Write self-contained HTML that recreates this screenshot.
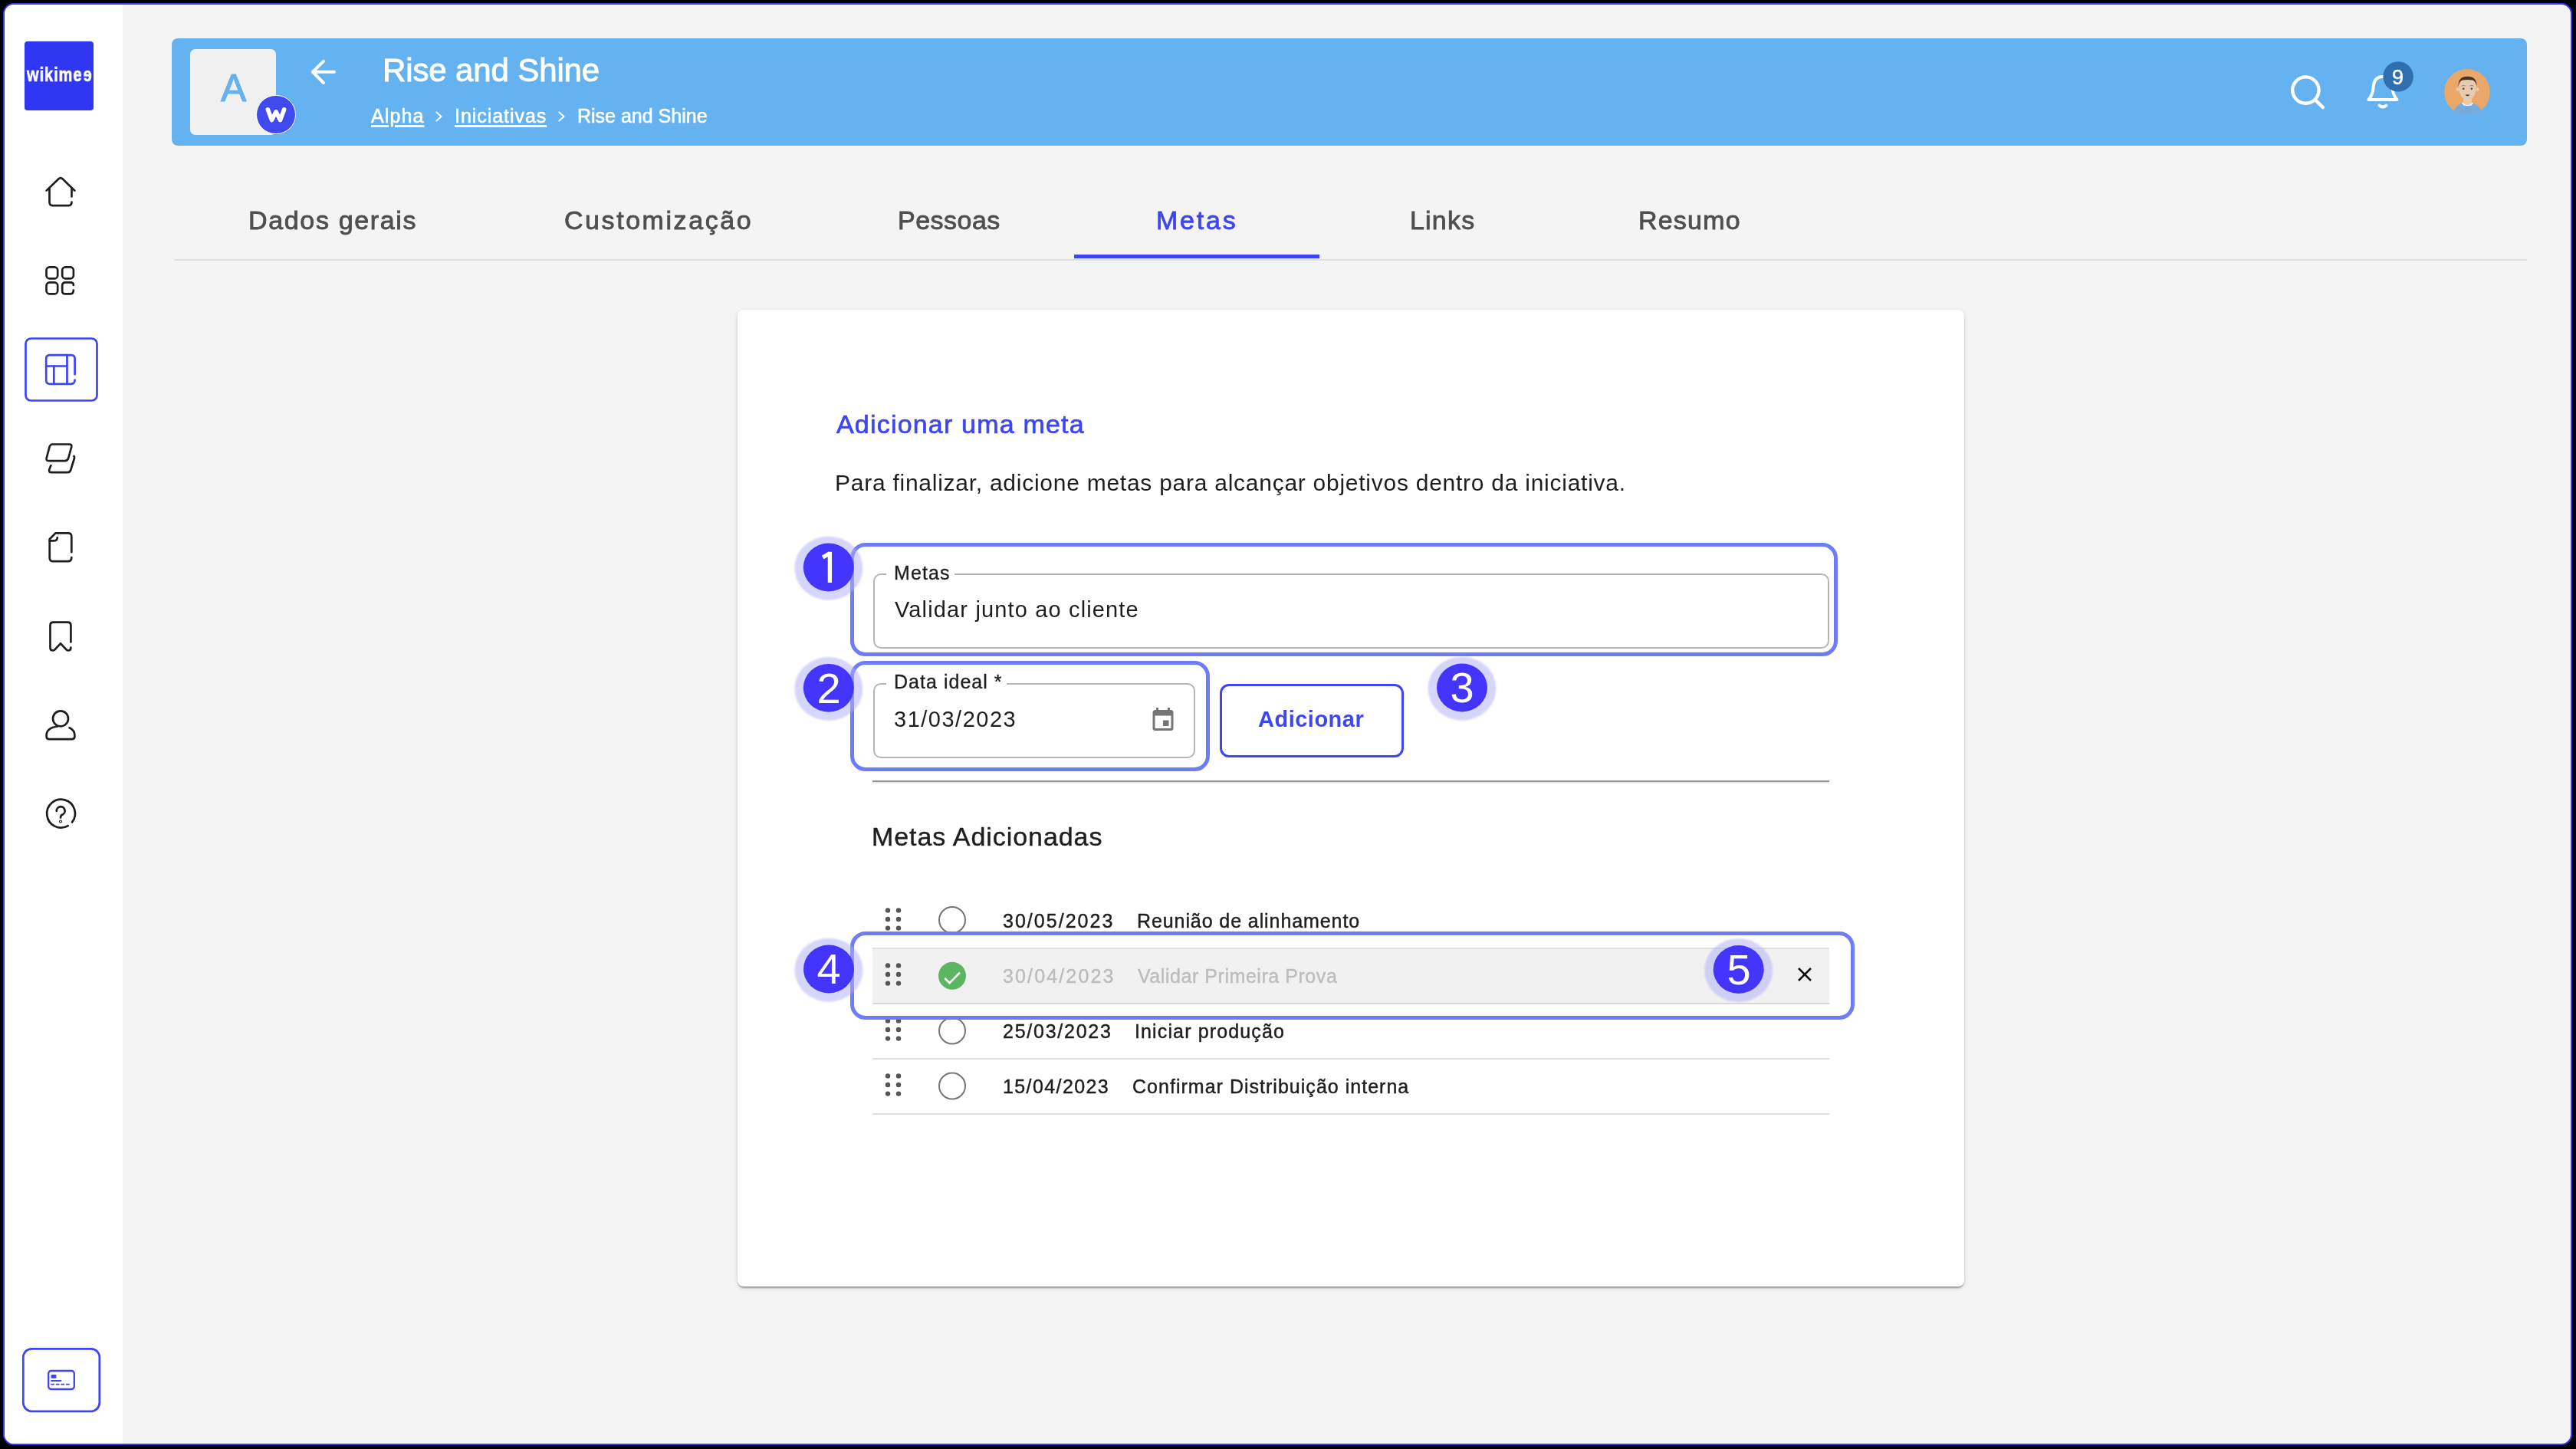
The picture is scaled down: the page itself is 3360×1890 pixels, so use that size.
<!DOCTYPE html>
<html><head><meta charset="utf-8"><title>Metas</title><style>
*{margin:0;padding:0;box-sizing:border-box}
html,body{width:3360px;height:1890px;overflow:hidden;background:#000;font-family:"Liberation Sans",sans-serif}
.t{position:absolute;white-space:pre;line-height:1;will-change:transform}
.ib{display:inline-block}
u{text-decoration-thickness:3px;text-underline-offset:2.5px}
#frame{position:absolute;left:4px;top:4px;width:3351px;height:1881px;border:2px solid #3d35f5;border-radius:14px;background:#f4f4f4}
#sidebar{position:absolute;left:6px;top:6px;width:154px;height:1877px;background:#fff;border-radius:12px 0 0 12px}
#logo{position:absolute;left:32px;top:54px;width:90px;height:90px;background:#2f37f2;border-radius:4px}
#header{position:absolute;left:224px;top:50px;width:3072px;height:140px;background:#64b2f0;border-radius:8px}
#avsq{position:absolute;left:248px;top:64px;width:112px;height:112px;background:#f1f1f1;border-radius:7px}
#wcirc{position:absolute;left:334.4px;top:123.9px;width:51.2px;height:51.2px;border-radius:50%;background:#4048f0;border:1.8px solid #fff}
#tabline{position:absolute;left:227px;top:338px;width:3069px;height:2px;background:#e0e0e0}
#tabind{position:absolute;left:1401px;top:332px;width:320px;height:5px;background:#3d46f0}
#card{position:absolute;left:962px;top:404px;width:1600px;height:1274px;background:#fff;border-radius:8px;box-shadow:0 4px 2px -2px rgba(0,0,0,.2),0 2px 2px 0 rgba(0,0,0,.14),0 2px 6px 0 rgba(0,0,0,.12)}
.hl{position:absolute;border:5px solid #6f7cf8;border-radius:20px}
.fld{position:absolute;border:2px solid #b5b5b5;border-radius:10px}
.notch{position:absolute;height:6px;background:#fff}
#btn{position:absolute;left:1591px;top:892px;width:240px;height:96px;border:3px solid #3d46f0;border-radius:12px}
#div1{position:absolute;left:1138px;top:1018px;width:1248px;height:2px;background:#929292;box-shadow:0 2px 0 #ececec}
.row{position:absolute;left:1138px;width:1248px;height:72px;border-bottom:2px solid #e0e0e0}
.row.done{background:#f1f1f1;border-bottom-color:#d9d9d9}
.ov{position:absolute;left:0;top:0}
</style></head>
<body>
<div id="frame"></div>
<div id="sidebar"></div>
<div id="logo"></div>
<div id="header"></div>
<div id="avsq"></div>
<div id="wcirc"></div>
<div id="tabline"></div>
<div id="tabind"></div>
<div id="card"></div>
<div class="row" style="top:1166px"></div>
<div class="row done" style="top:1238px"></div>
<div class="row" style="top:1310px"></div>
<div class="row" style="top:1382px"></div>
<div class="fld" style="left:1138.5px;top:748px;width:1247px;height:98px"></div>
<div class="notch" style="left:1156px;top:746px;width:89px"></div>
<div class="fld" style="left:1138.5px;top:891px;width:420px;height:98px"></div>
<div class="notch" style="left:1156px;top:888px;width:157px"></div>
<div id="btn"></div>
<div id="div1"></div>
<svg class="ov" width="3360" height="1890" viewBox="0 0 3360 1890">
 <g fill="none" stroke="#1e1e1e" stroke-width="2.7" stroke-linecap="round" stroke-linejoin="round">
  <path d="M60.6,248.6 L76.5,233.3 Q79,231 81.5,233.3 L97.4,248.6"/>
  <path d="M64.5,245 V263.5 Q64.5,268.2 69.2,268.2 H88.8 Q93.5,268.2 93.5,263.5"/>
  <path d="M93.5,256.4 V245"/>
  <rect x="60.5" y="348.4" width="14.7" height="15" rx="4.2"/>
  <rect x="81.2" y="348.4" width="14.7" height="15" rx="4.2"/>
  <rect x="60.5" y="368.4" width="14.7" height="15" rx="4.2"/>
  <path d="M95.9,372 Q95.9,368.4 91.7,368.4 H85.4 Q81.2,368.4 81.2,372.6 V379.2 Q81.2,383.4 85.4,383.4 H91.7 Q95.9,383.4 95.9,378.5"/>
  <path d="M68.5,579.5 H90.5 Q94,579.5 93.2,583 L89.2,597.5 Q88.2,601.2 84.5,601.2 H63.5 Q59.8,601.2 60.7,597.5 L64.5,583 Q65.5,579.5 68.5,579.5 Z"/>
  <path d="M66.4,607.1 L64.2,612.6 Q63.3,616.2 67,616.2 H88 Q91.5,616.2 92.4,612.6 L97,597.5 Q97.3,595.5 96.4,594.9"/>
  <path d="M93.3,720.2 V700 Q93.3,695.4 88.7,695.4 H72.4 L64.7,703.2 V727.5 Q64.7,732.2 69.4,732.2 H88.6 Q93.3,732.2 93.3,727"/>
  <path d="M64.7,705.3 H70.5 Q74.8,705.3 74.8,701"/>
  <path d="M92.4,837.5 V815.6 Q92.4,811.6 88.4,811.6 H69.5 Q65.5,811.6 65.5,815.6 V845 Q65.5,848.5 69,848.5 Q70.3,848.5 71.3,847.5 L79,839.3 L86.7,847.5 Q87.7,848.5 89,848.5 Q92.4,848.5 92.4,844.7"/>
  <circle cx="79" cy="937.3" r="10"/>
  <path d="M75,947.5 Q60.6,949.5 60.6,959 V960.5 Q60.6,964.2 64.3,964.2 H93.7 Q97.4,964.2 97.4,960.5 V959 Q97.4,952.5 90.5,949.3"/>
  <path d="M88.7,1077.1 A18.4,18.4 0 1 1 94.1,1072.4"/>
  <path d="M73.8,1057.9 A5.4,5.4 0 1 1 81.5,1062.5 Q79,1063.5 79,1066.4"/>
  <circle cx="79" cy="1071.5" r="0.6" stroke-width="3"/>
 </g>
 <g fill="none" stroke="#3d44f5" stroke-width="2.7" stroke-linecap="round" stroke-linejoin="round">
  <rect x="33.5" y="441.5" width="93" height="81" rx="7"/>
  <path d="M97.6,488.3 V468 Q97.6,463.2 92.8,463.2 H65 Q60.2,463.2 60.2,468 V496 Q60.2,500.8 65,500.8 H92.8 Q97.6,500.8 97.6,495.6"/>
  <path d="M60.2,477.5 H87.5"/>
  <path d="M87.5,463.2 V500.8"/>
  <path d="M70.3,477.5 V500.8"/>
  <rect x="30.3" y="1759.3" width="99.5" height="81.5" rx="11"/>
  <rect x="63.2" y="1788" width="33.6" height="24" rx="3.5" stroke-width="2.3"/>
  <path d="M67,1801 H79.5" stroke-width="1.9"/>
  <path d="M67,1805.6 H91" stroke-width="1.9" stroke-dasharray="3.2 3.4"/>
 </g>
 <rect x="66.6" y="1793" width="6.8" height="4.7" rx="1.2" fill="#3d44f5"/>
 <g fill="none" stroke="#fff" stroke-width="4" stroke-linecap="round" stroke-linejoin="round">
  <path d="M422,79.8 L407.8,93.8 L422,108 M407.8,93.8 H436"/>
  <path d="M349.3,142.8 L354.5,156.6 L360,145.8 L365.5,156.6 L370.6,142.8" stroke-width="5.6"/>
  <path d="M569.5,146.5 L575.5,152 L569.5,157.5 M729.5,146.5 L735.5,152 L729.5,157.5" stroke-width="2.2"/>
  <circle cx="3007.4" cy="117.6" r="17.2" stroke-width="4.4"/>
  <path d="M3021.2,131.7 L3030,140.1" stroke-width="4.4"/>
  <path d="M3089.5,130 Q3095,123 3095.5,115 Q3096,100 3108,100 Q3120,100 3120.5,115 Q3121,123 3126.5,130 Z"/>
  <path d="M3103.5,137.5 Q3108,141.5 3112.5,137.5"/>
 </g>
 <circle cx="3128.1" cy="99.9" r="19.7" fill="#2f6fae"/>
 <!-- avatar -->
 <clipPath id="avc"><circle cx="3218" cy="120" r="30"/></clipPath>
 <circle cx="3218" cy="120" r="30" fill="#e9a867"/>
 <g clip-path="url(#avc)">
  <ellipse cx="3218.5" cy="152" rx="19.5" ry="19" fill="#76abe0"/>
  <rect x="3213" y="127" width="11" height="11" fill="#e6cbb0"/>
  <path d="M3211.5,134.5 Q3218.5,140 3225.5,134.5" stroke="#fff" stroke-width="1.8" fill="none"/>
  <path d="M3213,135 Q3218.5,139.5 3224,135 L3224,133 L3213,133 Z" fill="#e6cbb0"/>
 </g>
 <circle cx="3205.6" cy="116.5" r="2.3" fill="#e6cbb0"/>
 <circle cx="3231.4" cy="116.5" r="2.3" fill="#e6cbb0"/>
 <path d="M3207,108 Q3207,130.5 3218.5,130.5 Q3230,130.5 3230,108 Q3230,101 3218.5,101 Q3207,101 3207,108 Z" fill="#e6cbb0"/>
 <path d="M3206.6,112.5 Q3206,99.8 3218.5,99.8 Q3231,99.8 3230.4,112.5 Q3229,105.5 3225,104.5 Q3218.5,103.3 3212,104.5 Q3208,105.5 3206.6,112.5 Z" fill="#4a3128"/>
 <circle cx="3213.2" cy="115.7" r="1.3" fill="#5a4a3e"/>
 <circle cx="3223.9" cy="115.7" r="1.3" fill="#5a4a3e"/>
 <path d="M3210.5,112.3 Q3213,110.6 3215.6,112" stroke="#9b8070" stroke-width="0.9" fill="none"/>
 <path d="M3221.4,112 Q3224,110.6 3226.6,112.3" stroke="#9b8070" stroke-width="0.9" fill="none"/>
 <path d="M3215.5,123.5 Q3218.5,127.2 3221.5,123.5 Z" fill="#3e332c"/>
 <!-- calendar icon -->
 <path transform="translate(1499,921.5) scale(1.5)" fill="#757575" d="M17 12h-5v5h5v-5zM16 1v2H8V1H6v2H5c-1.11 0-1.99.9-1.99 2L3 19c0 1.1.89 2 2 2h14c1.1 0 2-.9 2-2V5c0-1.1-.9-2-2-2h-1V1h-2zm3 18H5V8h14v11z"/>
 <path d="M2346,1263 L2362,1279 M2362,1263 L2346,1279" stroke="#111" stroke-width="2.6" fill="none"/>
 <circle cx="1158" cy="1187.4" r="3.2" fill="#555"/>
 <circle cx="1158" cy="1199.0" r="3.2" fill="#555"/>
 <circle cx="1158" cy="1210.6" r="3.2" fill="#555"/>
 <circle cx="1172" cy="1187.4" r="3.2" fill="#555"/>
 <circle cx="1172" cy="1199.0" r="3.2" fill="#555"/>
 <circle cx="1172" cy="1210.6" r="3.2" fill="#555"/>
 <circle cx="1242" cy="1200.0" r="17" fill="none" stroke="#757575" stroke-width="2"/>
 <circle cx="1158" cy="1259.4" r="3.2" fill="#555"/>
 <circle cx="1158" cy="1271.0" r="3.2" fill="#555"/>
 <circle cx="1158" cy="1282.6" r="3.2" fill="#555"/>
 <circle cx="1172" cy="1259.4" r="3.2" fill="#555"/>
 <circle cx="1172" cy="1271.0" r="3.2" fill="#555"/>
 <circle cx="1172" cy="1282.6" r="3.2" fill="#555"/>
 <circle cx="1242" cy="1272.8" r="18" fill="#5cb563"/>
 <path d="M1232.3,1276 L1238.6,1282.2 L1252,1268.6" stroke="#fff" stroke-width="2.6" fill="none"/>
 <circle cx="1158" cy="1331.4" r="3.2" fill="#555"/>
 <circle cx="1158" cy="1343.0" r="3.2" fill="#555"/>
 <circle cx="1158" cy="1354.6" r="3.2" fill="#555"/>
 <circle cx="1172" cy="1331.4" r="3.2" fill="#555"/>
 <circle cx="1172" cy="1343.0" r="3.2" fill="#555"/>
 <circle cx="1172" cy="1354.6" r="3.2" fill="#555"/>
 <circle cx="1242" cy="1344.5" r="17" fill="none" stroke="#757575" stroke-width="2"/>
 <circle cx="1158" cy="1403.4" r="3.2" fill="#555"/>
 <circle cx="1158" cy="1415.0" r="3.2" fill="#555"/>
 <circle cx="1158" cy="1426.6" r="3.2" fill="#555"/>
 <circle cx="1172" cy="1403.4" r="3.2" fill="#555"/>
 <circle cx="1172" cy="1415.0" r="3.2" fill="#555"/>
 <circle cx="1172" cy="1426.6" r="3.2" fill="#555"/>
 <circle cx="1242" cy="1416.5" r="17" fill="none" stroke="#757575" stroke-width="2"/>
</svg>
<div class="hl" style="left:1109px;top:708px;width:1288px;height:148px"></div>
<div class="hl" style="left:1109px;top:862px;width:469px;height:143.8px"></div>
<div class="hl" style="left:1109px;top:1215px;width:1310px;height:115px"></div>
<svg class="ov" width="3360" height="1890" viewBox="0 0 3360 1890">
 <filter id="hb" x="-20%" y="-20%" width="140%" height="140%"><feGaussianBlur stdDeviation="1.3"/></filter>
 <ellipse cx="1080.8" cy="741.2" rx="44.5" ry="41.5" fill="rgba(176,175,248,0.52)" filter="url(#hb)"/>
 <ellipse cx="1080.8" cy="740" rx="33" ry="31.4" fill="#4335fc"/>
 <ellipse cx="1080.8" cy="898.5" rx="44.5" ry="41.5" fill="rgba(176,175,248,0.52)" filter="url(#hb)"/>
 <ellipse cx="1080.8" cy="897.3" rx="33" ry="31.4" fill="#4335fc"/>
 <ellipse cx="1907" cy="898.2" rx="44.5" ry="41.5" fill="rgba(176,175,248,0.52)" filter="url(#hb)"/>
 <ellipse cx="1907" cy="897" rx="33" ry="31.4" fill="#4335fc"/>
 <ellipse cx="1081" cy="1265.2" rx="44.5" ry="41.5" fill="rgba(176,175,248,0.52)" filter="url(#hb)"/>
 <ellipse cx="1081" cy="1264" rx="33" ry="31.4" fill="#4335fc"/>
 <ellipse cx="2267.7" cy="1265.7" rx="44.5" ry="41.5" fill="rgba(176,175,248,0.52)" filter="url(#hb)"/>
 <ellipse cx="2267.7" cy="1264.5" rx="33" ry="31.4" fill="#4335fc"/>
 <path d="M1073.2,727 L1082.4,721.6 M1082.4,719.7 V760.1" stroke="#fff" stroke-width="5.3" fill="none"/>
</svg>
<div class="t" style="left:35.0px;top:85.4px;font-size:25px;color:#fff;font-weight:700;letter-spacing:1.2px;transform:scaleX(0.8);transform-origin:0 0;-webkit-text-stroke:0.7px #fff;">wikim<span class="ib">e</span><span class="ib" style="transform:scaleX(-1)">e</span></div>
<div class="t" style="left:287.5px;top:89.7px;font-size:50px;color:#64b2f0;font-weight:400;letter-spacing:0px;-webkit-text-stroke:1.1px #64b2f0;">A</div>
<div class="t" style="left:498.5px;top:70.8px;font-size:42px;color:#fff;font-weight:400;letter-spacing:-0.13px;-webkit-text-stroke:0.9px #fff;">Rise and Shine</div>
<div class="t" style="left:484.0px;top:138.8px;font-size:25px;color:#fff;font-weight:400;letter-spacing:1.1px;-webkit-text-stroke:0.6px #fff;"><u>Alpha</u></div>
<div class="t" style="left:592.5px;top:138.8px;font-size:25px;color:#fff;font-weight:400;letter-spacing:0.95px;-webkit-text-stroke:0.6px #fff;"><u>Iniciativas</u></div>
<div class="t" style="left:753.0px;top:138.8px;font-size:25px;color:#fff;font-weight:400;letter-spacing:0px;-webkit-text-stroke:0.6px #fff;">Rise and Shine</div>
<div class="t" style="left:324.0px;top:270.2px;font-size:34px;color:#4f4f4f;font-weight:400;letter-spacing:1.65px;-webkit-text-stroke:0.85px #4f4f4f;">Dados gerais</div>
<div class="t" style="left:735.6px;top:270.2px;font-size:34px;color:#4f4f4f;font-weight:400;letter-spacing:2.56px;-webkit-text-stroke:0.85px #4f4f4f;">Customização</div>
<div class="t" style="left:1171.0px;top:270.2px;font-size:34px;color:#4f4f4f;font-weight:400;letter-spacing:0.48px;-webkit-text-stroke:0.85px #4f4f4f;">Pessoas</div>
<div class="t" style="left:1508.0px;top:270.2px;font-size:34px;color:#3d46f0;font-weight:400;letter-spacing:2.8px;-webkit-text-stroke:0.85px #3d46f0;">Metas</div>
<div class="t" style="left:1839.0px;top:270.2px;font-size:34px;color:#4f4f4f;font-weight:400;letter-spacing:1.2px;-webkit-text-stroke:0.85px #4f4f4f;">Links</div>
<div class="t" style="left:2136.9px;top:270.2px;font-size:34px;color:#4f4f4f;font-weight:400;letter-spacing:1.2px;-webkit-text-stroke:0.85px #4f4f4f;">Resumo</div>
<div class="t" style="left:1091.0px;top:536.2px;font-size:34px;color:#3d46f0;font-weight:400;letter-spacing:1.19px;-webkit-text-stroke:0.7px #3d46f0;">Adicionar uma meta</div>
<div class="t" style="left:1088.5px;top:615.1px;font-size:30px;color:#1e1e1e;font-weight:400;letter-spacing:0.74px;">Para finalizar, adicione metas para alcançar objetivos dentro da iniciativa.</div>
<div class="t" style="left:1166.0px;top:735.0px;font-size:25px;color:#1e1e1e;font-weight:400;letter-spacing:1.1px;-webkit-text-stroke:0.35px #1e1e1e;">Metas</div>
<div class="t" style="left:1167.0px;top:781.2px;font-size:29px;color:#1e1e1e;font-weight:400;letter-spacing:1.15px;">Validar junto ao cliente</div>
<div class="t" style="left:1166.0px;top:877.3px;font-size:25px;color:#1e1e1e;font-weight:400;letter-spacing:1.03px;-webkit-text-stroke:0.35px #1e1e1e;">Data ideal *</div>
<div class="t" style="left:1166.0px;top:924.2px;font-size:29px;color:#1e1e1e;font-weight:400;letter-spacing:1.5px;">31/03/2023</div>
<div class="t" style="left:1641.0px;top:924.2px;font-size:29px;color:#3d46f0;font-weight:700;letter-spacing:0.5px;">Adicionar</div>
<div class="t" style="left:1137.2px;top:1074.2px;font-size:34px;color:#1e1e1e;font-weight:400;letter-spacing:0.94px;-webkit-text-stroke:0.4px #1e1e1e;">Metas Adicionadas</div>
<div class="t" style="left:1307.5px;top:1188.8px;font-size:25px;color:#1e1e1e;font-weight:400;letter-spacing:2.03px;-webkit-text-stroke:0.45px #1e1e1e;">30/05/2023</div>
<div class="t" style="left:1483.0px;top:1188.8px;font-size:25px;color:#1e1e1e;font-weight:400;letter-spacing:0.91px;-webkit-text-stroke:0.45px #1e1e1e;">Reunião de alinhamento</div>
<div class="t" style="left:1307.5px;top:1260.8px;font-size:25px;color:#bdbdbd;font-weight:400;letter-spacing:2.14px;-webkit-text-stroke:0.45px #bdbdbd;">30/04/2023</div>
<div class="t" style="left:1484.4px;top:1260.8px;font-size:25px;color:#bdbdbd;font-weight:400;letter-spacing:0.55px;-webkit-text-stroke:0.45px #bdbdbd;">Validar Primeira Prova</div>
<div class="t" style="left:1307.5px;top:1332.8px;font-size:25px;color:#1e1e1e;font-weight:400;letter-spacing:1.75px;-webkit-text-stroke:0.45px #1e1e1e;">25/03/2023</div>
<div class="t" style="left:1479.6px;top:1332.8px;font-size:25px;color:#1e1e1e;font-weight:400;letter-spacing:1.13px;-webkit-text-stroke:0.45px #1e1e1e;">Iniciar produção</div>
<div class="t" style="left:1307.5px;top:1404.8px;font-size:25px;color:#1e1e1e;font-weight:400;letter-spacing:1.4px;-webkit-text-stroke:0.45px #1e1e1e;">15/04/2023</div>
<div class="t" style="left:1477.2px;top:1404.8px;font-size:25px;color:#1e1e1e;font-weight:400;letter-spacing:1.02px;-webkit-text-stroke:0.45px #1e1e1e;">Confirmar Distribuição interna</div>
<div class="t" style="left:1040.8px;top:869.7px;font-size:56px;color:#fff;font-weight:400;letter-spacing:0px;width:80px;text-align:center;">2</div>
<div class="t" style="left:1867.0px;top:869.4px;font-size:56px;color:#fff;font-weight:400;letter-spacing:0px;width:80px;text-align:center;">3</div>
<div class="t" style="left:1041.0px;top:1236.4px;font-size:56px;color:#fff;font-weight:400;letter-spacing:0px;width:80px;text-align:center;">4</div>
<div class="t" style="left:2227.7px;top:1236.9px;font-size:56px;color:#fff;font-weight:400;letter-spacing:0px;width:80px;text-align:center;">5</div>
<div class="t" style="left:3119.8px;top:87.5px;font-size:27px;color:#fff;font-weight:400;letter-spacing:0px;-webkit-text-stroke:0.5px #fff;">9</div>
</body></html>
